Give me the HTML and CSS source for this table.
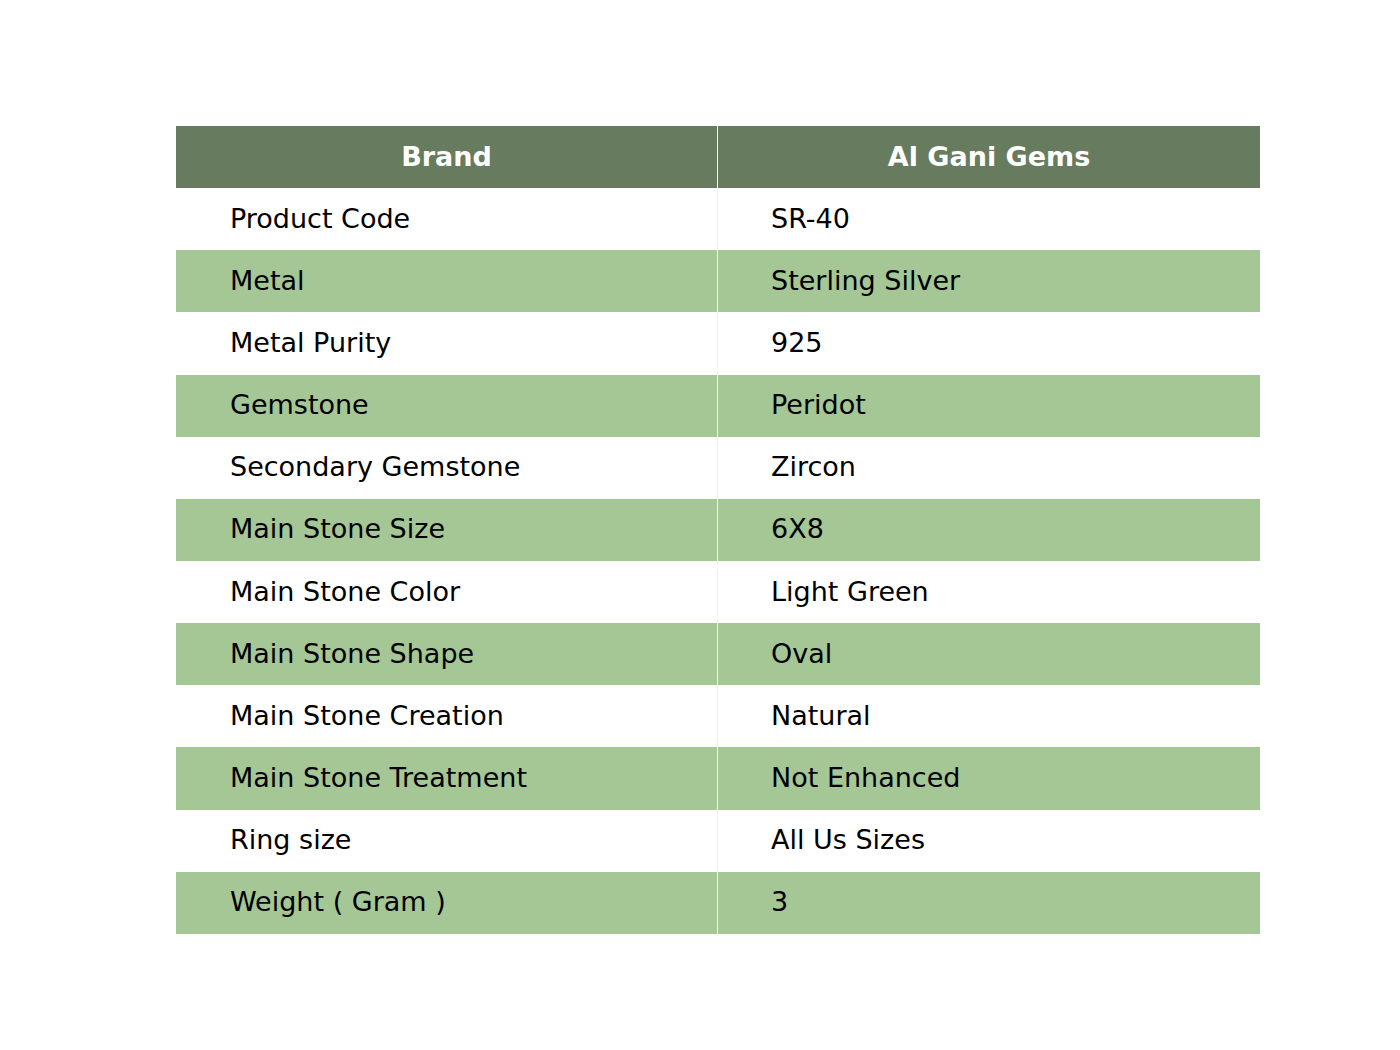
FILE: index.html
```html
<!DOCTYPE html>
<html>
<head>
<meta charset="utf-8">
<link rel="stylesheet" href="styles.css">
</head>
<body>
<div class="page">
  <div class="spec">
    <div class="cell head">Brand</div><div class="cell head">Al Gani Gems</div>
    <div class="cell">Product Code</div><div class="cell">SR-40</div>
    <div class="cell alt">Metal</div><div class="cell alt">Sterling Silver</div>
    <div class="cell">Metal Purity</div><div class="cell">925</div>
    <div class="cell alt">Gemstone</div><div class="cell alt">Peridot</div>
    <div class="cell">Secondary Gemstone</div><div class="cell">Zircon</div>
    <div class="cell alt">Main Stone Size</div><div class="cell alt">6X8</div>
    <div class="cell">Main Stone Color</div><div class="cell">Light Green</div>
    <div class="cell alt">Main Stone Shape</div><div class="cell alt">Oval</div>
    <div class="cell">Main Stone Creation</div><div class="cell">Natural</div>
    <div class="cell alt">Main Stone Treatment</div><div class="cell alt">Not Enhanced</div>
    <div class="cell">Ring size</div><div class="cell">All Us Sizes</div>
    <div class="cell alt">Weight ( Gram )</div><div class="cell alt">3</div>
  </div>
</div>
</body>
</html>
```

FILE: styles.css
```css
html, body {
  margin: 0;
  padding: 0;
  background: #ffffff;
}
.page {
  width: 1400px;
  height: 1050px;
  padding: 126px 0 0 176px;
  box-sizing: border-box;
}
.spec {
  display: grid;
  width: 1084px;
  grid-template-columns: 542px 542px;
  grid-template-rows: repeat(13, 62.15px);
  font-family: "DejaVu Sans", sans-serif;
  font-size: 27px;
  color: #000000;
}
.cell {
  display: flex;
  align-items: center;
  padding-left: 54px;
  padding-bottom: 2px;
  box-sizing: border-box;
  background: #ffffff;
}
.cell:nth-child(2n+1) {
  border-right: 1px solid #f2f6f0;
}
.cell:nth-child(2n) {
  padding-left: 53px;
}
.alt {
  background: #a5c695;
}
.head {
  background: #677c5f;
  color: #ffffff;
  font-weight: bold;
  justify-content: center;
  padding-left: 0;
}
.cell.head:nth-child(2n) {
  padding-left: 0;
}
```
